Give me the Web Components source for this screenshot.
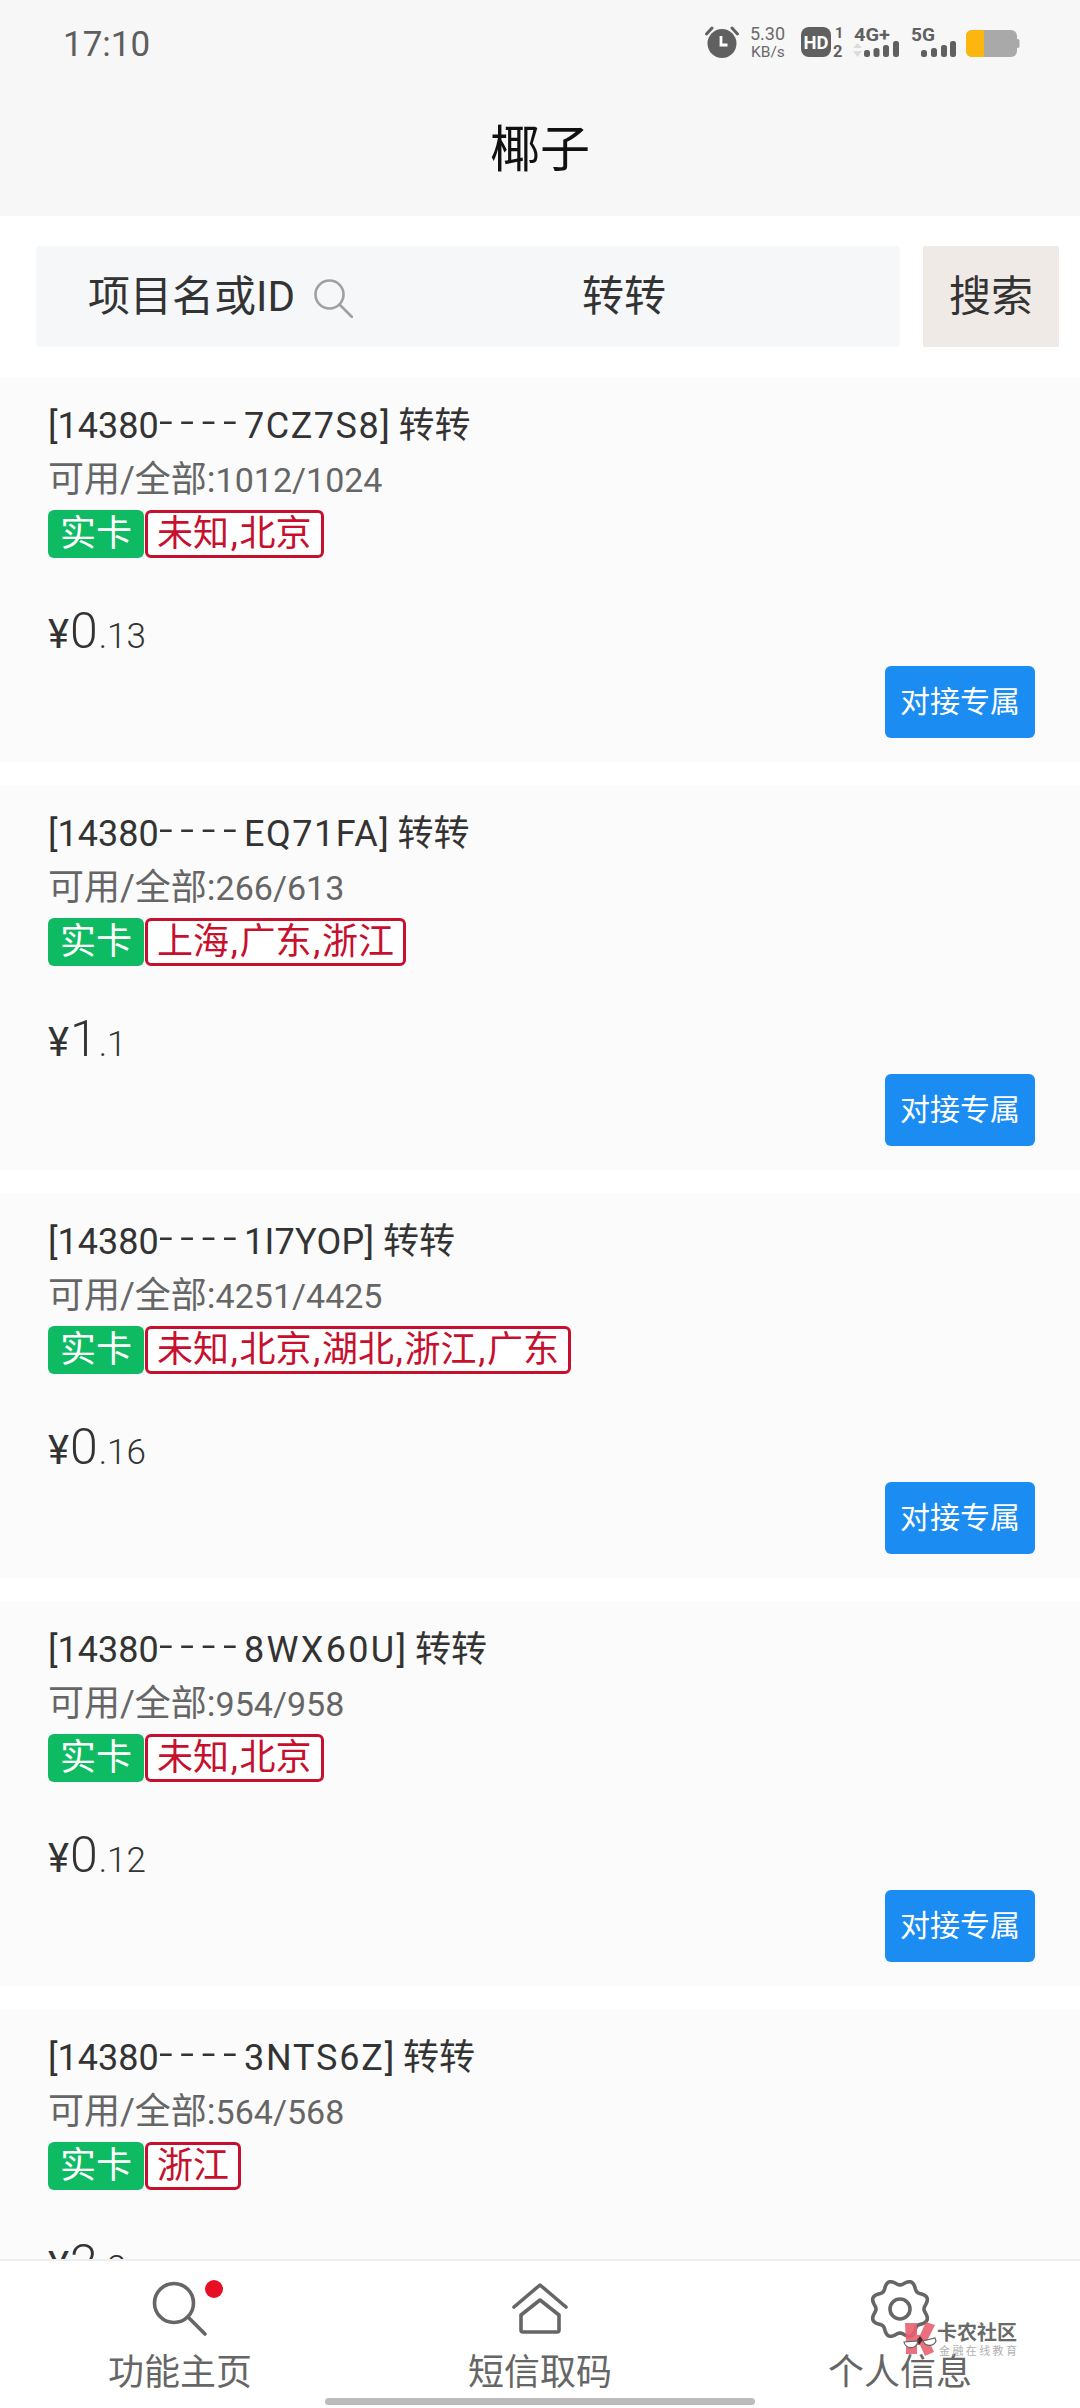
<!DOCTYPE html>
<html lang="zh"><head><meta charset="utf-8"><style>
html,body{margin:0;padding:0;background:#fff}
body{width:1080px;height:2408px;overflow:hidden;font-family:Roboto,"Noto Sans CJK SC",sans-serif}
</style></head><body>
<app-shell></app-shell>
<script>
function el(name, css, html){
  customElements.define(name, class extends HTMLElement{
    connectedCallback(){
      if(this.shadowRoot) return;
      const s=this.attachShadow({mode:'open'});
      const h=typeof html==='function'?html(this):html;
      s.innerHTML='<style>'+css+'</style>'+h;
    }
  });
}
const FONT='Roboto,"Noto Sans CJK SC",sans-serif';
function gearPath(cx,cy){
  let d='';
  for(let i=0;i<=160;i++){
    const a=i/160*Math.PI*2, r=26.6-2.6*Math.cos(8*a);
    d+=(i?'L':'M')+(cx+r*Math.sin(a)).toFixed(2)+' '+(cy-r*Math.cos(a)).toFixed(2);
  }
  return d+'z';
}
el('status-bar',`
:host{display:flex;justify-content:space-between;align-items:center;height:86px;padding:0 59px 0 63px;box-sizing:border-box}
.t{font:400 35px/1 ${FONT};color:#5e5e5e;margin-top:2px}
svg{display:block}
text{font-family:Roboto,sans-serif}
`,`<span class="t">17:10</span>
<svg width="316" height="44" viewBox="0 0 316 44" fill="#606060">
 <circle cx="17" cy="22.500" r="14.500"/><path d="M16 15v9h6.500" fill="none" stroke="#fff" stroke-width="2.800"/>
 <path d="M1.500 13 7 7M32.500 13 27 7" stroke="#606060" stroke-width="3" stroke-linecap="round"/>
 <text x="45" y="19" font-size="18" fill="#6a6a6a">5.30</text>
 <text x="46" y="36" font-size="15.500" fill="#6a6a6a">KB/s</text>
 <rect x="96" y="6" width="30" height="30" rx="8"/>
 <text x="98.500" y="27.500" font-size="18" font-weight="700" fill="#fff" textLength="25" lengthAdjust="spacingAndGlyphs">HD</text>
 <text x="130" y="17" font-size="14.500" font-weight="700">1</text>
 <text x="128" y="35.500" font-size="16.500" font-weight="700">2</text>
 <text x="149" y="20" font-size="19" font-weight="700" textLength="36" lengthAdjust="spacingAndGlyphs">4G+</text>
 <path d="M148 27h9l-4.500-5zM148 30h9l-4.500 6z" fill="#dcdcdc"/>
 <rect x="159" y="29" width="6" height="7" rx="2.500"/><rect x="168.500" y="27" width="6" height="9" rx="2.500"/><rect x="178" y="24" width="6" height="12" rx="2.500"/><rect x="188" y="20" width="6" height="16" rx="2.500"/>
 <text x="206" y="20" font-size="19" font-weight="700" textLength="24" lengthAdjust="spacingAndGlyphs">5G</text>
 <rect x="216" y="29" width="6" height="7" rx="2.500"/><rect x="226" y="27" width="6" height="9" rx="2.500"/><rect x="236" y="24" width="6" height="12" rx="2.500"/><rect x="245" y="20" width="6" height="16" rx="2.500"/>
 <rect x="261" y="9" width="51" height="27" rx="6" fill="#a9a9a9"/><path d="M267 9h12v27h-12a6 6 0 0 1-6-6V15a6 6 0 0 1 6-6z" fill="#fdb60f"/><rect x="311" y="18" width="3.500" height="9" rx="1.700" fill="#a9a9a9"/>
</svg>`);
el('title-bar',`
:host{display:flex;justify-content:center;align-items:center;height:130px;padding-bottom:2px;box-sizing:border-box;font:400 50px/1 ${FONT};color:#111}
`,`<slot></slot>`);
el('app-header',`:host{display:block;background:#f7f7f7}`,`<slot></slot>`);
el('search-bar',`
:host{display:flex;gap:23px;height:162px;box-sizing:border-box;padding:30px 21px 31px 36px;background:#fff;font:400 42px/1 ${FONT};color:#333}
.box{flex:1;background:#f6f7f9;border-radius:4px;display:flex;align-items:center;padding-left:52px}
.lb{display:flex;align-items:center;width:494px}
svg{margin-left:18px;margin-top:2px}
.btn{width:136px;background:#efeae6;border-radius:2px;display:flex;align-items:center;justify-content:center}
`,`<div class="box"><div class="lb">项目名或ID<svg width="40" height="40" viewBox="0 0 40 40" fill="none" stroke="#a0a0a0" stroke-width="2.600" stroke-linecap="round"><circle cx="16.500" cy="16.500" r="14"/><path d="M27 27 39 39"/></svg></div><span>转转</span></div><div class="btn">搜索</div>`);
el('tag-label',`
:host{display:inline-flex;align-items:center;justify-content:center;height:48px;box-sizing:border-box;border-radius:6px;font:400 36px/1 ${FONT};white-space:pre}
:host([type=g]){background:#0fbb62;color:#fff;width:96px}
:host([type=r]){border:3px solid #c7102e;color:#c7102e;padding:0 9px;margin-left:1px;background:#fff}
`,`<slot></slot>`);
el('project-card',`
:host{display:block;height:384px;box-sizing:border-box;background:#fbfbfb;padding:26px 0 0 48px;flex:none}
.n{font:400 36px/44px ${FONT};color:#333;white-space:pre}
.d{font-size:50px;font-weight:300;line-height:0;letter-spacing:7px}
.s{font:400 36px/44px ${FONT};color:#666;margin-top:10px}
.s span{font-size:34px}
.tags{display:flex;margin-top:8px}
.cm{margin:0 1.700px}
.p{display:flex;align-items:baseline;margin-top:47px;color:#333;font:400 40px/52px ${FONT}}
.p b{font:300 50px/52px ${FONT};margin-left:1px}
.p i{font:300 35px/52px ${FONT};color:#333;margin-left:1px}
.r{display:flex;justify-content:flex-end;padding-right:45px;margin-top:3px}
.b{width:150px;height:72px;background:#1a8cf2;border-radius:6px;color:#fff;font:400 30px/72px ${FONT};text-align:center}
`,(h)=>{
 const id=h.getAttribute('pid');
 const ls=h.getAttribute('ls');
 const area=h.getAttribute('area').replace(/,/g,'<span class="cm">,</span>');
 const [i,f]=h.getAttribute('price').split('.');
 return `<div class="n">[14380<span class="d">----</span><span style="letter-spacing:${ls}px">${id}</span>] 转转</div>
 <div class="s">可用/全部:<span>${h.getAttribute('stock')}</span></div>
 <div class="tags"><tag-label type="g">实卡</tag-label><tag-label type="r">${area}</tag-label></div>
 <div class="p">¥<b>${i}</b><i>.${f}</i></div>
 <div class="r"><div class="b">对接专属</div></div>`;
});
el('tab-item',`
:host{flex:1;display:flex;flex-direction:column;align-items:center;color:#666;font:400 36px/1 ${FONT}}
.ic{height:68px;margin-top:14px;display:flex;align-items:center;justify-content:center}
.l{margin-top:12px}
`,`<div class="ic"><slot name="icon"></slot></div><div class="l"><slot></slot></div>`);
el('water-mark',`
:host{position:absolute;left:903px;top:2321px;width:170px;height:40px;display:block;pointer-events:none}
.a{position:absolute;left:34px;top:0;font:700 20px/22px "Noto Sans CJK SC",sans-serif;color:#6a6a6a;white-space:nowrap}
.c{position:absolute;left:36px;top:22px;font:400 11px/14px "Noto Sans CJK SC",sans-serif;color:#b0b0b0;letter-spacing:2.400px;white-space:nowrap}
svg{position:absolute;left:0;top:0}
`,`<svg width="34" height="36" viewBox="0 0 34 36"><path d="M2 2h12v12L17 14 23 1l9 3-7 14 6 13-9 4-5-11-3 0v9H3V22z" fill="#e8606f" opacity=".9"/><path d="M17 15l3 4-4 5-2-5z" fill="#4a2a2e"/><path d="M1 21a7 7 0 0 0 13 2l1-3zM20 20a7 7 0 0 0 13 0l-1-3z" fill="#fff" stroke="#666" stroke-width="1.200"/></svg><span class="a">卡农社区</span><span class="c">金融在线教育</span>`);
el('tab-bar',`
:host{display:flex;height:149px;flex:none;box-sizing:border-box;background:#fff;border-top:2px solid #eeeeee;position:relative}
.home{position:absolute;left:325px;bottom:3px;width:430px;height:7px;border-radius:4px;background:#bbb}
`,`<slot></slot><div class="home"></div>`);
el('app-shell',`
:host{display:flex;flex-direction:column;height:2408px;width:1080px;position:relative;overflow:hidden}
.list{flex:1;min-height:0;overflow:hidden;display:flex;flex-direction:column;gap:24px}
svg{display:block}
.dot{position:absolute;left:205px;top:19px;width:18px;height:18px;border-radius:50%;background:#e60f24}
`,`<app-header><status-bar></status-bar><title-bar>椰子</title-bar></app-header>
<search-bar></search-bar>
<div class="list">
<project-card pid="7CZ7S8" ls="1.500" stock="1012/1024" area="未知,北京" price="0.13"></project-card>
<project-card pid="EQ71FA" ls="1.500" stock="266/613" area="上海,广东,浙江" price="1.1"></project-card>
<project-card pid="1I7YOP" ls="0.250" stock="4251/4425" area="未知,北京,湖北,浙江,广东" price="0.16"></project-card>
<project-card pid="8WX60U" ls="2.300" stock="954/958" area="未知,北京" price="0.12"></project-card>
<project-card pid="3NTS6Z" ls="1.800" stock="564/568" area="浙江" price="2.2"></project-card>
</div>
<tab-bar>
<tab-item><svg slot="icon" width="56" height="56" viewBox="0 0 56 56" fill="none" stroke="#666" stroke-width="3.600" stroke-linecap="round"><circle cx="22" cy="22" r="19.500"/><path d="M36 36 53 53"/></svg>功能主页</tab-item>
<tab-item><svg slot="icon" width="56" height="52" viewBox="0 0 56 52" fill="none" stroke="#666" stroke-width="3.600" stroke-linecap="round" stroke-linejoin="round"><path d="M2 24 28 2l26 22"/><path d="M9 32 28 17l19 15v15a2 2 0 0 1-2 2H11a2 2 0 0 1-2-2z"/></svg>短信取码</tab-item>
<tab-item><svg slot="icon" width="60" height="62" viewBox="0 0 60 62" fill="none" stroke="#666" stroke-width="3.600" stroke-linejoin="round"><path d="${gearPath(30,31)}"/><circle cx="30" cy="31" r="10"/></svg>个人信息</tab-item>
<div class="dot"></div>
</tab-bar>
<water-mark></water-mark>`);
</script>
</body></html>
